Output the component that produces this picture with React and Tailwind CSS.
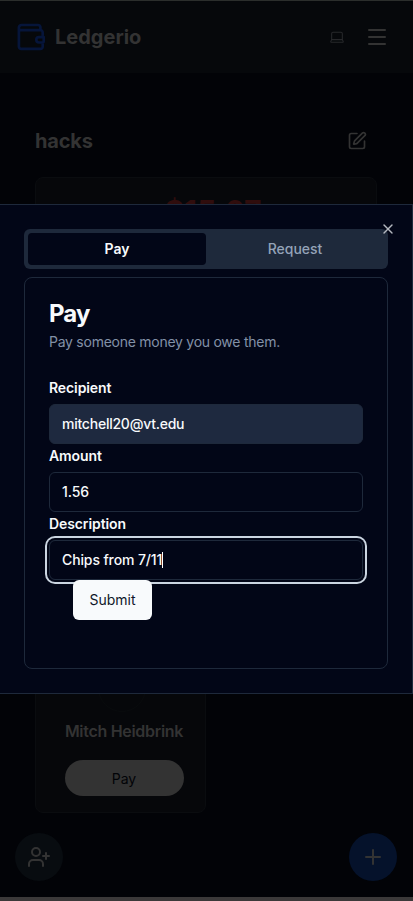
import React, { useState } from "react";
import { Laptop, Menu, Plus, SquarePen, UserPlus, X } from "lucide-react";

function WalletLogo() {
  return (
    <svg width="30" height="30" viewBox="0 0 30 30" fill="none" stroke="#06153a" strokeWidth="2.7" strokeLinejoin="round">
      <path d="M2.900 8.200v16.300a2.400 2.400 0 0 0 2.400 2.400h19.200a2.200 2.200 0 0 0 2.200-2.200v-3.200M2.900 8.200h21.600a2.200 2.200 0 0 1 2.200 2.200v4M2.900 8.200V5.600a2.600 2.600 0 0 1 2.600-2.600h16.300a2.600 2.600 0 0 1 2.600 2.600v2.600" />
      <path d="M27.700 15.100h-4.700a2.700 2.700 0 0 0 0 5.400h3.700a1 1 0 0 0 1-1z" />
    </svg>
  );
}

function Header() {
  return (
    <header className="flex h-[73px] shrink-0 items-center justify-between border-t border-[#2b2e2c] bg-[#06080b] pl-4 pr-6">
      <div className="flex items-center gap-2 text-[20px] font-bold text-[#333333]">
        <WalletLogo />
        <span className="pl-px">Ledgerio</span>
      </div>
      <div className="flex items-center gap-5">
        <Laptop size={16} strokeWidth={1.6} className="text-[#27282b]" />
        <Menu size={24} strokeWidth={2} className="text-[#333333]" />
      </div>
    </header>
  );
}

function GroupPage() {
  return (
    <main className="flex flex-1 flex-col px-[35px] pt-14">
      <div className="flex h-6 items-center justify-between pr-[11px]">
        <h1 className="text-[20px] font-bold tracking-[-0.2px] text-[#333333]">hacks</h1>
        <SquarePen size={20} className="text-[#333333]" />
      </div>
      <section className="mt-6 mr-px flex h-40 items-start justify-center rounded-lg border border-[#0a0c0f] bg-[#06070a] pt-[15px] pl-[14px]">
        <span className="text-[30px] leading-9 font-bold text-[#300d0d]">$15.67</span>
      </section>
      <section className="mt-[276px] flex h-[200px] w-[171px] flex-col items-center rounded-lg border border-[#0a0c0f] bg-[#06070a] pt-[50px] pl-[7px]">
        <div className="mr-[5px] size-12 shrink-0 rounded-full border border-[#090b0d]" />
        <div className="mt-[9px] flex h-5 items-center text-[16px] font-semibold tracking-[-0.3px] text-[#333333]">
          Mitch Heidbrink
        </div>
        <button className="mt-[19px] h-9 w-[119px] shrink-0 rounded-full bg-[#333333] text-[14px] text-[#020307]">Pay</button>
      </section>
    </main>
  );
}

function FloatingActions() {
  return (
    <div className="flex shrink-0 justify-between px-4 pb-4 pl-[15px]">
      <button className="flex size-12 items-center justify-center rounded-full bg-[#080c10] text-[#333333]">
        <UserPlus size={24} />
      </button>
      <button className="flex size-12 items-center justify-center rounded-full bg-[#05122b] text-[#333333]">
        <Plus size={24} />
      </button>
    </div>
  );
}

const inputBase = "flex h-10 items-center rounded-md border border-[#1e293b] px-3 text-[14px] font-medium";

function Field({ label, value, filled, focused }) {
  return (
    <div>
      <label className="flex h-7 items-center pb-[6px] text-[14px] font-semibold tracking-[-0.1px]">
        <span>{label}</span>
      </label>
      <div
        className={`${inputBase} ${filled ? "bg-[#1e293f] tracking-[-0.24px]" : "bg-[#020617] tracking-[-0.12px]"} ${
          focused ? "ring-2 ring-[#cbd5e1] ring-offset-2 ring-offset-[#020617]" : ""
        }`}
      >
        <span className="pb-px">{value}</span>
        {focused && <span className="h-4 w-px bg-white" />}
      </div>
    </div>
  );
}

function PaymentDialog() {
  const [tab, setTab] = useState("Pay");

  return (
    <div className="absolute inset-x-0 top-[204px] h-[490px] border-y border-r border-[#1e293b] bg-[#020617] p-6 text-[#f8fafc]">
      <div className="grid h-10 grid-cols-2 rounded-md bg-[#1e293b] p-1">
        {["Pay", "Request"].map((name) => (
          <button
            key={name}
            onClick={() => setTab(name)}
            className={`rounded-sm pb-px text-[14px] ${
              tab === name ? "bg-[#020617] font-semibold text-[#f8fafc]" : "font-medium text-[#94a3b8]"
            }`}
          >
            {name}
          </button>
        ))}
      </div>
      <button className="absolute top-4 right-4 text-[#b4b8bf]">
        <X size={16} strokeWidth={2} />
      </button>

      <div className="mt-2 h-[392px] rounded-lg border border-[#1e293b] px-6 pt-6">
        <h2 className="text-[24px] leading-6 font-bold tracking-[-0.9px]">{tab}</h2>
        <p className="mt-[6px] text-[14px] leading-5 tracking-[-0.26px] text-[#8291a7]">Pay someone money you owe them.</p>
        <form className="pt-6">
          <Field label="Recipient" value="mitchell20@vt.edu" filled />
          <Field label="Amount" value="1.56" />
          <Field label="Description" value="Chips from 7/11" focused />
          <button
            type="button"
            className="relative ml-6 block h-10 w-[79px] rounded-md bg-[#f8fafc] pb-px text-[14px] text-[#0f172a]"
          >
            Submit
          </button>
        </form>
      </div>
    </div>
  );
}

export default function App() {
  return (
    <div className="relative flex h-[901px] w-[413px] flex-col overflow-hidden border-b-4 border-[#3b3939] bg-[#020307] font-['Inter',sans-serif]">
      <Header />
      <GroupPage />
      <FloatingActions />
      <PaymentDialog />
    </div>
  );
}
